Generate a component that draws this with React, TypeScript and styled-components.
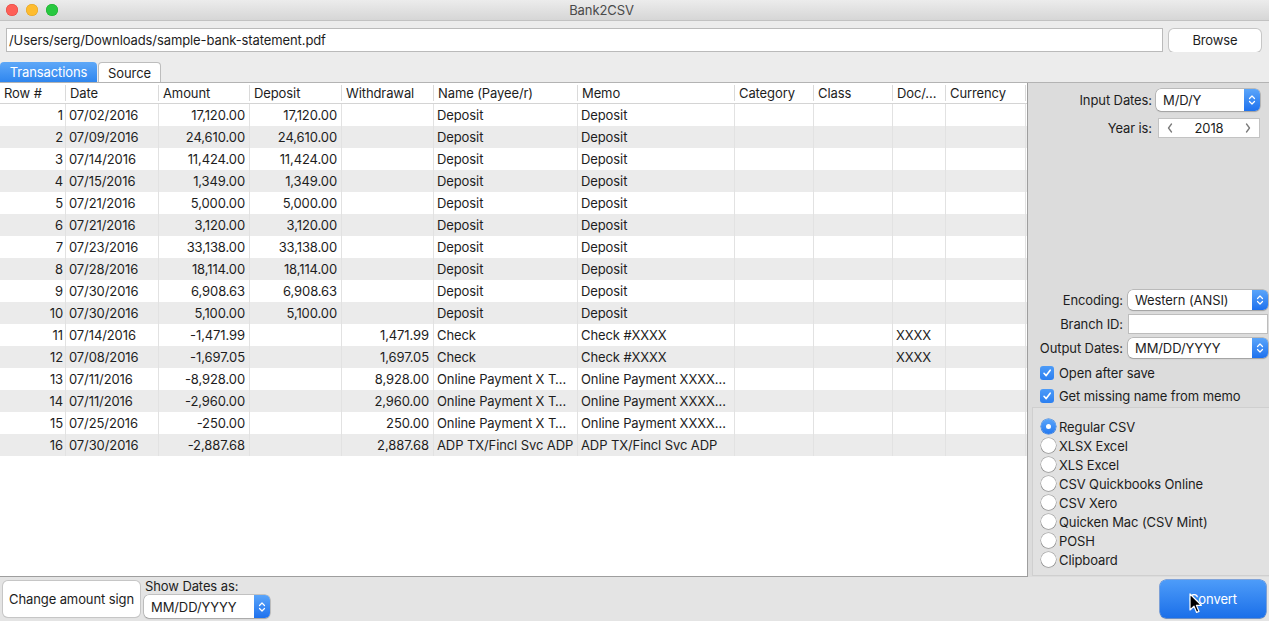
import React from 'react';
import styled, { createGlobalStyle } from 'styled-components';

const GlobalStyle = createGlobalStyle`
  html, body { margin: 0; padding: 0; }
  body {
    font-family: Inter, "Liberation Sans", sans-serif;
    font-size: 13px;
    letter-spacing: -0.1px;
    color: #1d1d1d;
    -webkit-font-smoothing: antialiased;
  }
  * { box-sizing: border-box; }
`;

const Window = styled.div`
  width: 1269px;
  height: 621px;
  display: flex;
  flex-direction: column;
  background: #e6e6e6;
  overflow: hidden;
`;

const TitleBar = styled.div`
  height: 21px;
  flex: none;
  display: flex;
  align-items: center;
  background: linear-gradient(#ececec, #d6d6d6);
  border-bottom: 1px solid #c2c2c2;
`;

const Lights = styled.div`
  display: flex;
  gap: 8px;
  padding-left: 6px;
  width: 64px;
`;

const Light = styled.span<{ $c: string; $b: string }>`
  width: 12px;
  height: 12px;
  border-radius: 50%;
  background: ${(p) => p.$c};
  box-shadow: inset 0 0 0 0.5px ${(p) => p.$b};
`;

const Title = styled.div`
  flex: 1;
  text-align: center;
  padding-right: 130px;
  color: #4a4a4a;
  font-size: 13px;
`;

const PathRow = styled.div`
  display: flex;
  align-items: center;
  gap: 6px;
  padding: 7px 8px 0 6px;
  background: #ececec;
`;

const PathInput = styled.div`
  flex: 1;
  height: 24px;
  background: #fff;
  border: 1px solid #bababa;
  padding-left: 2px;
  display: flex;
  align-items: center;
`;

const PushButton = styled.div<{ $w: number; $h: number }>`
  width: ${(p) => p.$w}px;
  height: ${(p) => p.$h}px;
  background: #fff;
  border-radius: 5px;
  box-shadow: 0 0 0 1px #c6c6c6, 0 1px 1px rgba(0, 0, 0, 0.08);
  display: flex;
  align-items: center;
  justify-content: center;
  flex: none;
`;

const TabBar = styled.div`
  display: flex;
  gap: 1px;
  padding-top: 10px;
  background: #ececec;
`;

const Tab = styled.div<{ $active?: boolean; $w: number }>`
  width: ${(p) => p.$w}px;
  height: 20px;
  display: flex;
  align-items: center;
  justify-content: center;
  border-radius: 4px 4px 0 0;
  ${(p) =>
    p.$active
      ? `background: linear-gradient(#5ea8f8, #2f86ef); color: #fff;`
      : `background: #fff; border: 1px solid #bdbdbd; border-bottom: none; color: #1d1d1d;`}
`;

const Main = styled.div`
  flex: 1;
  display: flex;
  border-top: 1px solid #b3b3b3;
  min-height: 0;
`;

const TablePane = styled.div`
  width: 1028px;
  flex: none;
  background: #fff;
  border-right: 1px solid #9e9e9e;
  border-bottom: 1px solid #9e9e9e;
  display: flex;
  flex-direction: column;
`;

const COLS = '66px 93px 91px 92px 92px 144px 157px 79px 79px 53px 80px';

const HeaderRow = styled.div`
  display: grid;
  grid-template-columns: ${COLS};
  height: 21px;
  border-bottom: 1px solid #d4d4d4;
  align-items: center;
`;

const HeadCell = styled.div`
  padding: 0 4px;
  height: 16px;
  line-height: 16px;
  border-right: 1px solid #dadada;
  white-space: nowrap;
  overflow: hidden;
`;

const Row = styled.div<{ $alt: boolean }>`
  display: grid;
  grid-template-columns: ${COLS};
  height: 22px;
  background: ${(p) => (p.$alt ? '#ebebeb' : '#fff')};
`;

const Cell = styled.div<{ $right?: boolean }>`
  padding: 0 ${(p) => (p.$right ? '4px' : '3px')} 0 3px;
  line-height: 22px;
  border-right: 1px solid #e2e2e2;
  text-align: ${(p) => (p.$right ? 'right' : 'left')};
  white-space: nowrap;
  overflow: hidden;
`;

const IndexCell = styled(Cell)`
  padding-right: 2px;
`;

const SidePanel = styled.div`
  flex: 1;
  background: #dcdcdc;
  display: flex;
  flex-direction: column;
  padding-bottom: 1px;
`;

const TopForm = styled.div`
  display: grid;
  grid-template-columns: auto 104px;
  justify-content: end;
  align-items: center;
  column-gap: 4px;
  row-gap: 7px;
  padding: 6px 9px 0 0;
`;

const LowerForm = styled.div`
  margin-top: auto;
  display: grid;
  grid-template-columns: auto 140px;
  grid-auto-rows: 20px;
  justify-content: end;
  align-items: center;
  column-gap: 5px;
  row-gap: 4px;
  padding-right: 1px;
`;

const Label = styled.div`
  text-align: right;
  white-space: nowrap;
`;

const SelectBox = styled.div<{ $h: number }>`
  height: ${(p) => p.$h}px;
  background: #fff;
  border-radius: 5px;
  box-shadow: 0 0 0 0.5px rgba(0, 0, 0, 0.3), 0 1px 1.5px rgba(0, 0, 0, 0.15);
  display: flex;
  align-items: center;
  overflow: hidden;
`;

const SelectText = styled.div`
  flex: 1;
  padding-left: 7px;
  white-space: nowrap;
`;

const Knob = styled.div`
  width: 16px;
  align-self: stretch;
  background: linear-gradient(#5aa5fa, #1e71ee);
  display: flex;
  align-items: center;
  justify-content: center;
`;

const YearBox = styled.div`
  height: 20px;
  margin-left: 2px;
  background: #fff;
  border: 1px solid #c3c3c3;
  display: flex;
  align-items: center;
  justify-content: space-between;
  padding: 0 8px;
`;

const TextField = styled.div`
  height: 20px;
  background: #fff;
  border: 1px solid #bdbdbd;
`;

const CheckList = styled.div`
  margin-top: 3px;
  padding-left: 12px;
  display: flex;
  flex-direction: column;
`;

const CheckRow = styled.div`
  height: 23px;
  display: flex;
  align-items: center;
  gap: 5px;
`;

const CheckBox = styled.span`
  width: 14px;
  height: 14px;
  border-radius: 3px;
  background: linear-gradient(#4c9bf8, #2b7ff0);
  display: flex;
  align-items: center;
  justify-content: center;
`;

const RadioGroup = styled.div`
  margin-left: 4px;
  height: 169px;
  background: #e1e1e1;
  border: 1px solid #cfcfcf;
  border-right: none;
  padding: 9px 0 6px 8px;
  display: flex;
  flex-direction: column;
`;

const RadioRow = styled.div`
  height: 19px;
  display: flex;
  align-items: center;
  gap: 3px;
`;

const Radio = styled.span<{ $on?: boolean }>`
  width: 15px;
  height: 15px;
  border-radius: 50%;
  display: flex;
  align-items: center;
  justify-content: center;
  ${(p) =>
    p.$on
      ? `background: linear-gradient(#5aa5fa, #2479f0); box-shadow: 0 0 0 0.5px #2a74d8;`
      : `background: #fff; box-shadow: 0 0 0 0.5px rgba(0,0,0,0.35), 0 1px 1px rgba(0,0,0,0.12);`}
`;

const Dot = styled.span`
  width: 5px;
  height: 5px;
  border-radius: 50%;
  background: #fff;
`;

const BottomBar = styled.div`
  height: 44px;
  flex: none;
  display: flex;
  align-items: center;
  padding: 0 3px;
  background: #e4e4e4;
`;

const DateGroup = styled.div`
  margin-left: 4px;
  display: flex;
  flex-direction: column;
  gap: 1px;
  padding-bottom: 1px;
`;

const SmallLabel = styled.div`
  line-height: 15px;
  padding-left: 1px;
`;

const ConvertButton = styled.div`
  margin-left: auto;
  position: relative;
  width: 106px;
  height: 38px;
  border-radius: 6px;
  background: linear-gradient(#4d9cf9, #1b6fe9);
  box-shadow: 0 0 0 0.5px #1a62cf, 0 1px 1px rgba(0, 0, 0, 0.2);
  color: #fff;
  display: flex;
  align-items: center;
  justify-content: center;
`;

const Cursor = styled.svg`
  position: absolute;
  left: 29px;
  top: 13px;
`;

const Updown = () => (
  <svg width="8" height="12" viewBox="0 0 8 12">
    <path d="M1.5 4.5 L4 2 L6.5 4.5 M1.5 7.5 L4 10 L6.5 7.5" fill="none" stroke="#fff" strokeWidth="1.2" strokeLinecap="round" strokeLinejoin="round" />
  </svg>
);

const Select = ({ text, h }: { text: string; h: number }) => (
  <SelectBox $h={h}>
    <SelectText>{text}</SelectText>
    <Knob>
      <Updown />
    </Knob>
  </SelectBox>
);

const Chevron = ({ dir }: { dir: 'l' | 'r' }) => (
  <svg width="6" height="10" viewBox="0 0 6 10">
    <path d={dir === 'l' ? 'M4.5 1 L1.5 5 L4.5 9' : 'M1.5 1 L4.5 5 L1.5 9'} fill="none" stroke="#7a7a7a" strokeWidth="1.3" strokeLinecap="round" strokeLinejoin="round" />
  </svg>
);

const Check = () => (
  <svg width="10" height="10" viewBox="0 0 10 10">
    <path d="M2 5.3 L4.2 7.6 L8.2 2.2" fill="none" stroke="#fff" strokeWidth="1.6" strokeLinecap="round" strokeLinejoin="round" />
  </svg>
);

const headers = ['Row #', 'Date', 'Amount', 'Deposit', 'Withdrawal', 'Name (Payee/r)', 'Memo', 'Category', 'Class', 'Doc/...', 'Currency'];

type Tx = [string, string, string, string, string, string, string];
const rows: Tx[] = [
  ['07/02/2016', '17,120.00', '17,120.00', '', 'Deposit', 'Deposit', ''],
  ['07/09/2016', '24,610.00', '24,610.00', '', 'Deposit', 'Deposit', ''],
  ['07/14/2016', '11,424.00', '11,424.00', '', 'Deposit', 'Deposit', ''],
  ['07/15/2016', '1,349.00', '1,349.00', '', 'Deposit', 'Deposit', ''],
  ['07/21/2016', '5,000.00', '5,000.00', '', 'Deposit', 'Deposit', ''],
  ['07/21/2016', '3,120.00', '3,120.00', '', 'Deposit', 'Deposit', ''],
  ['07/23/2016', '33,138.00', '33,138.00', '', 'Deposit', 'Deposit', ''],
  ['07/28/2016', '18,114.00', '18,114.00', '', 'Deposit', 'Deposit', ''],
  ['07/30/2016', '6,908.63', '6,908.63', '', 'Deposit', 'Deposit', ''],
  ['07/30/2016', '5,100.00', '5,100.00', '', 'Deposit', 'Deposit', ''],
  ['07/14/2016', '-1,471.99', '', '1,471.99', 'Check', 'Check #XXXX', 'XXXX'],
  ['07/08/2016', '-1,697.05', '', '1,697.05', 'Check', 'Check #XXXX', 'XXXX'],
  ['07/11/2016', '-8,928.00', '', '8,928.00', 'Online Payment X T…', 'Online Payment XXXX…', ''],
  ['07/11/2016', '-2,960.00', '', '2,960.00', 'Online Payment X T…', 'Online Payment XXXX…', ''],
  ['07/25/2016', '-250.00', '', '250.00', 'Online Payment X T…', 'Online Payment XXXX…', ''],
  ['07/30/2016', '-2,887.68', '', '2,887.68', 'ADP TX/Fincl Svc ADP', 'ADP TX/Fincl Svc ADP', ''],
];

const formats = ['Regular CSV', 'XLSX Excel', 'XLS Excel', 'CSV Quickbooks Online', 'CSV Xero', 'Quicken Mac (CSV Mint)', 'POSH', 'Clipboard'];

export default function App() {
  return (
    <>
      <GlobalStyle />
      <Window>
        <TitleBar>
          <Lights>
            <Light $c="#fe5f57" $b="#e0443e" />
            <Light $c="#febc2e" $b="#dea123" />
            <Light $c="#28c840" $b="#1aab29" />
          </Lights>
          <Title>Bank2CSV</Title>
        </TitleBar>
        <PathRow>
          <PathInput>/Users/serg/Downloads/sample-bank-statement.pdf</PathInput>
          <PushButton $w={92} $h={23}>Browse</PushButton>
        </PathRow>
        <TabBar>
          <Tab $active $w={97}>Transactions</Tab>
          <Tab $w={63}>Source</Tab>
        </TabBar>
        <Main>
          <TablePane>
            <HeaderRow>
              {headers.map((h) => (
                <HeadCell key={h}>{h}</HeadCell>
              ))}
            </HeaderRow>
            {rows.map((r, i) => (
              <Row key={i} $alt={i % 2 === 1}>
                <IndexCell $right>{i + 1}</IndexCell>
                <Cell>{r[0]}</Cell>
                <Cell $right>{r[1]}</Cell>
                <Cell $right>{r[2]}</Cell>
                <Cell $right>{r[3]}</Cell>
                <Cell>{r[4]}</Cell>
                <Cell>{r[5]}</Cell>
                <Cell />
                <Cell />
                <Cell>{r[6]}</Cell>
                <Cell />
              </Row>
            ))}
          </TablePane>
          <SidePanel>
            <TopForm>
              <Label>Input Dates:</Label>
              <Select text="M/D/Y" h={22} />
              <Label>Year is:</Label>
              <YearBox>
                <Chevron dir="l" />
                <span>2018</span>
                <Chevron dir="r" />
              </YearBox>
            </TopForm>
            <LowerForm>
              <Label>Encoding:</Label>
              <Select text="Western (ANSI)" h={20} />
              <Label>Branch ID:</Label>
              <TextField />
              <Label>Output Dates:</Label>
              <Select text="MM/DD/YYYY" h={20} />
            </LowerForm>
            <CheckList>
              <CheckRow>
                <CheckBox><Check /></CheckBox>
                Open after save
              </CheckRow>
              <CheckRow>
                <CheckBox><Check /></CheckBox>
                Get missing name from memo
              </CheckRow>
            </CheckList>
            <RadioGroup>
              {formats.map((f, i) => (
                <RadioRow key={f}>
                  <Radio $on={i === 0}>{i === 0 && <Dot />}</Radio>
                  {f}
                </RadioRow>
              ))}
            </RadioGroup>
          </SidePanel>
        </Main>
        <BottomBar>
          <PushButton $w={137} $h={36}>Change amount sign</PushButton>
          <DateGroup>
            <SmallLabel>Show Dates as:</SmallLabel>
            <div style={{ width: 126 }}>
              <Select text="MM/DD/YYYY" h={23} />
            </div>
          </DateGroup>
          <ConvertButton>
            Convert
            <Cursor width="13" height="21" viewBox="0 0 13 21">
              <path d="M1 1 L1 17 L5 13.2 L7.6 19.4 L10 18.4 L7.4 12.3 L12.4 12.3 Z" fill="#000" stroke="#fff" strokeWidth="1.2" strokeLinejoin="round" />
            </Cursor>
          </ConvertButton>
        </BottomBar>
      </Window>
    </>
  );
}
